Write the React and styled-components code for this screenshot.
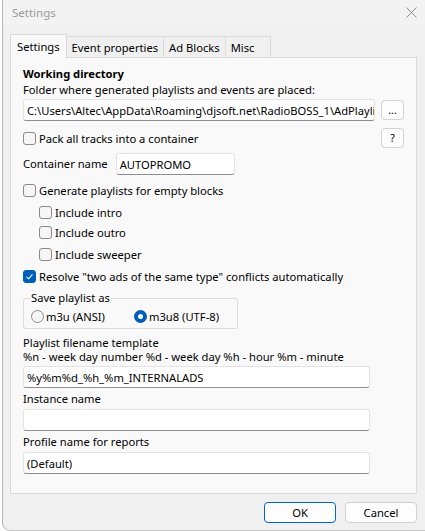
import React, { useState } from 'react';
import styled, { createGlobalStyle } from 'styled-components';

const GlobalStyle = createGlobalStyle`
    html, body {
        margin: 0;
        padding: 0;
        background: #ffffff;
    }
    body {
        font-family: "Noto Sans", "Open Sans", sans-serif;
        font-size: 11.2px;
        color: #000;
    }
`;

const Window = styled.div`
    width: 423px;
    height: 530px;
    margin-left: 2px;
    background: #f0f0f0;
    border-left: 1px solid #b5b5b5;
    border-bottom: 1px solid #c8c8c8;
    border-bottom-left-radius: 8px;
    display: flex;
    flex-direction: column;
    overflow: hidden;
`;

const TitleBar = styled.div`
    height: 24px;
    display: flex;
    align-items: center;
    justify-content: space-between;
    padding: 0 9px 0 9px;
    background: #f3f3f3;
    color: #9a9a9a;
    font-size: 11.5px;
`;

const CloseIcon = () => (
    <svg width="11" height="11" viewBox="0 0 11 11">
        <path d="M0.5 0.5 L10.5 10.5 M10.5 0.5 L0.5 10.5" stroke="#8a8a8a" strokeWidth="1" />
    </svg>
);

const Body = styled.div`
    flex: 1;
    display: flex;
    flex-direction: column;
    padding: 10px 9px 0 7px;
`;

const TabList = styled.div`
    display: flex;
    align-items: flex-end;
    height: 23px;
    position: relative;
    z-index: 1;
`;

const Tab = styled.div`
    height: ${({ active }) => (active ? '24px' : '22px')};
    min-width: 46px;
    padding: 0 ${({ active }) => (active ? '6px' : '5px')};
    display: flex;
    align-items: center;
    box-sizing: border-box;
    border: 1px solid #dadada;
    border-bottom: ${({ active }) => (active ? '1px solid #f9f9f9' : '1px solid #dadada')};
    margin-left: ${({ active }) => (active ? '0' : '-1px')};
    background: ${({ active }) => (active ? '#f9f9f9' : '#f0f0f0')};
    margin-bottom: -1px;
    white-space: nowrap;
`;

const Panel = styled.div`
    height: 437px;
    box-sizing: border-box;
    background: #f9f9f9;
    border: 1px solid #dadada;
    padding: 8px 12px 0 12px;
    display: flex;
    flex-direction: column;
`;

const Heading = styled.div`
    font-weight: bold;
    line-height: 16px;
`;

const Label = styled.div`
    line-height: ${({ lh }) => lh || 14}px;
    margin-top: ${({ top }) => top || 0}px;
    white-space: nowrap;
`;

const Row = styled.div`
    display: flex;
    align-items: center;
    justify-content: ${({ spread }) => (spread ? 'space-between' : 'flex-start')};
    gap: ${({ gap }) => gap || 0}px;
    margin-top: ${({ top }) => top || 0}px;
`;

const TextBox = styled.div`
    width: ${({ w }) => w}px;
    height: 22px;
    box-sizing: border-box;
    background: #ffffff;
    border: 1px solid #e3e3e3;
    border-bottom: 1px solid #8d8d8d;
    border-radius: 3px;
    padding: 0 3px;
    display: flex;
    align-items: center;
    overflow: hidden;
    white-space: nowrap;
    flex-shrink: 0;
`;

const SmallButton = styled.div`
    width: 23px;
    height: 20px;
    box-sizing: border-box;
    background: #fdfdfd;
    border: 1px solid #d3d3d3;
    border-radius: 4px;
    display: flex;
    align-items: center;
    justify-content: center;
    font-size: 10.5px;
    flex-shrink: 0;
`;

const Box = styled.span`
    width: 13px;
    height: 13px;
    box-sizing: border-box;
    border-radius: 3px;
    border: 1px solid ${({ checked }) => (checked ? '#005fb8' : '#8a8a8a')};
    background: ${({ checked }) => (checked ? '#005fb8' : '#f6f6f6')};
    display: inline-flex;
    align-items: center;
    justify-content: center;
    flex-shrink: 0;
`;

const CheckRow = styled.label`
    display: flex;
    align-items: center;
    gap: 3px;
    height: 20px;
    margin-top: ${({ top }) => top || 0}px;
    padding-left: ${({ indent }) => indent || 0}px;
    white-space: nowrap;
`;

function Checkbox({ checked, children, top, indent }) {
    return (
        <CheckRow top={top} indent={indent}>
            <Box checked={checked}>
                {checked && (
                    <svg width="9" height="9" viewBox="0 0 9 9">
                        <path d="M1.5 4.8 L3.6 6.8 L7.5 2.3" stroke="#fff" strokeWidth="1.1" fill="none" />
                    </svg>
                )}
            </Box>
            {children}
        </CheckRow>
    );
}

const GroupBox = styled.div`
    width: 215px;
    height: 31px;
    box-sizing: border-box;
    margin-top: 12px;
    padding: 0 0 0 7px;
    border: 1px solid #dcdcdc;
    border-radius: 3px;
    display: flex;
    flex-direction: column;
`;

const GroupTitle = styled.span`
    align-self: flex-start;
    margin: -8px 0 0 -1px;
    padding: 0 1px;
    line-height: 14px;
    background: #f9f9f9;
`;

const RadioCircle = styled.span`
    width: 13px;
    height: 13px;
    box-sizing: border-box;
    border-radius: 50%;
    border: ${({ checked }) => (checked ? '4px solid #005fb8' : '1px solid #8a8a8a')};
    background: ${({ checked }) => (checked ? '#ffffff' : '#f6f6f6')};
    flex-shrink: 0;
`;

const RadioRow = styled.label`
    display: flex;
    align-items: center;
    gap: 2px;
    height: 18px;
    width: ${({ w }) => w}px;
    white-space: nowrap;
`;

const Footer = styled.div`
    display: flex;
    justify-content: flex-end;
    gap: 9px;
    padding: 8px 0 0 0;
`;

const DialogButton = styled.div`
    width: 72px;
    height: 21px;
    box-sizing: border-box;
    background: #fdfdfd;
    border: 1px solid ${({ primary }) => (primary ? '#0067c0' : '#d0d0d0')};
    border-radius: 4px;
    display: flex;
    align-items: center;
    justify-content: center;
`;

export default function App() {
    const [tab] = useState('Settings');
    const tabs = ['Settings', 'Event properties', 'Ad Blocks', 'Misc'];
    return (
        <>
            <GlobalStyle />
            <Window>
                <TitleBar>
                    <span>Settings</span>
                    <CloseIcon />
                </TitleBar>
                <Body>
                    <TabList>
                        {tabs.map((t) => (
                            <Tab key={t} active={t === tab}>{t}</Tab>
                        ))}
                    </TabList>
                    <Panel>
                        <Heading>Working directory</Heading>
                        <Label lh={15}>Folder where generated playlists and events are placed:</Label>
                        <Row top={2} gap={6}>
                            <TextBox w={352}>C:\Users\Altec\AppData\Roaming\djsoft.net\RadioBOSS_1\AdPlaylists</TextBox>
                            <SmallButton>...</SmallButton>
                        </Row>
                        <Row top={7} spread>
                            <Checkbox>Pack all tracks into a container</Checkbox>
                            <SmallButton>?</SmallButton>
                        </Row>
                        <Row top={5} gap={8}>
                            <Label>Container name</Label>
                            <TextBox w={119}>AUTOPROMO</TextBox>
                        </Row>
                        <Checkbox top={5}>Generate playlists for empty blocks</Checkbox>
                        <Checkbox top={2} indent={16}>Include intro</Checkbox>
                        <Checkbox indent={16}>Include outro</Checkbox>
                        <Checkbox top={2} indent={16}>Include sweeper</Checkbox>
                        <Checkbox top={2} checked>Resolve "two ads of the same type" conflicts automatically</Checkbox>
                        <GroupBox>
                            <GroupTitle>Save playlist as</GroupTitle>
                            <Row top={2}>
                                <RadioRow w={103}>
                                    <RadioCircle />
                                    m3u (ANSI)
                                </RadioRow>
                                <RadioRow w={100}>
                                    <RadioCircle checked />
                                    m3u8 (UTF-8)
                                </RadioRow>
                            </Row>
                        </GroupBox>
                        <Label top={7}>Playlist filename template</Label>
                        <Label>%n - week day number %d - week day %h - hour %m - minute</Label>
                        <Row top={2}>
                            <TextBox w={347}>%y%m%d_%h_%m_INTERNALADS</TextBox>
                        </Row>
                        <Label top={4}>Instance name</Label>
                        <Row top={3}>
                            <TextBox w={347} />
                        </Row>
                        <Label top={4}>Profile name for reports</Label>
                        <Row top={3}>
                            <TextBox w={347}>(Default)</TextBox>
                        </Row>
                    </Panel>
                    <Footer>
                        <DialogButton primary>OK</DialogButton>
                        <DialogButton>Cancel</DialogButton>
                    </Footer>
                </Body>
            </Window>
        </>
    );
}
